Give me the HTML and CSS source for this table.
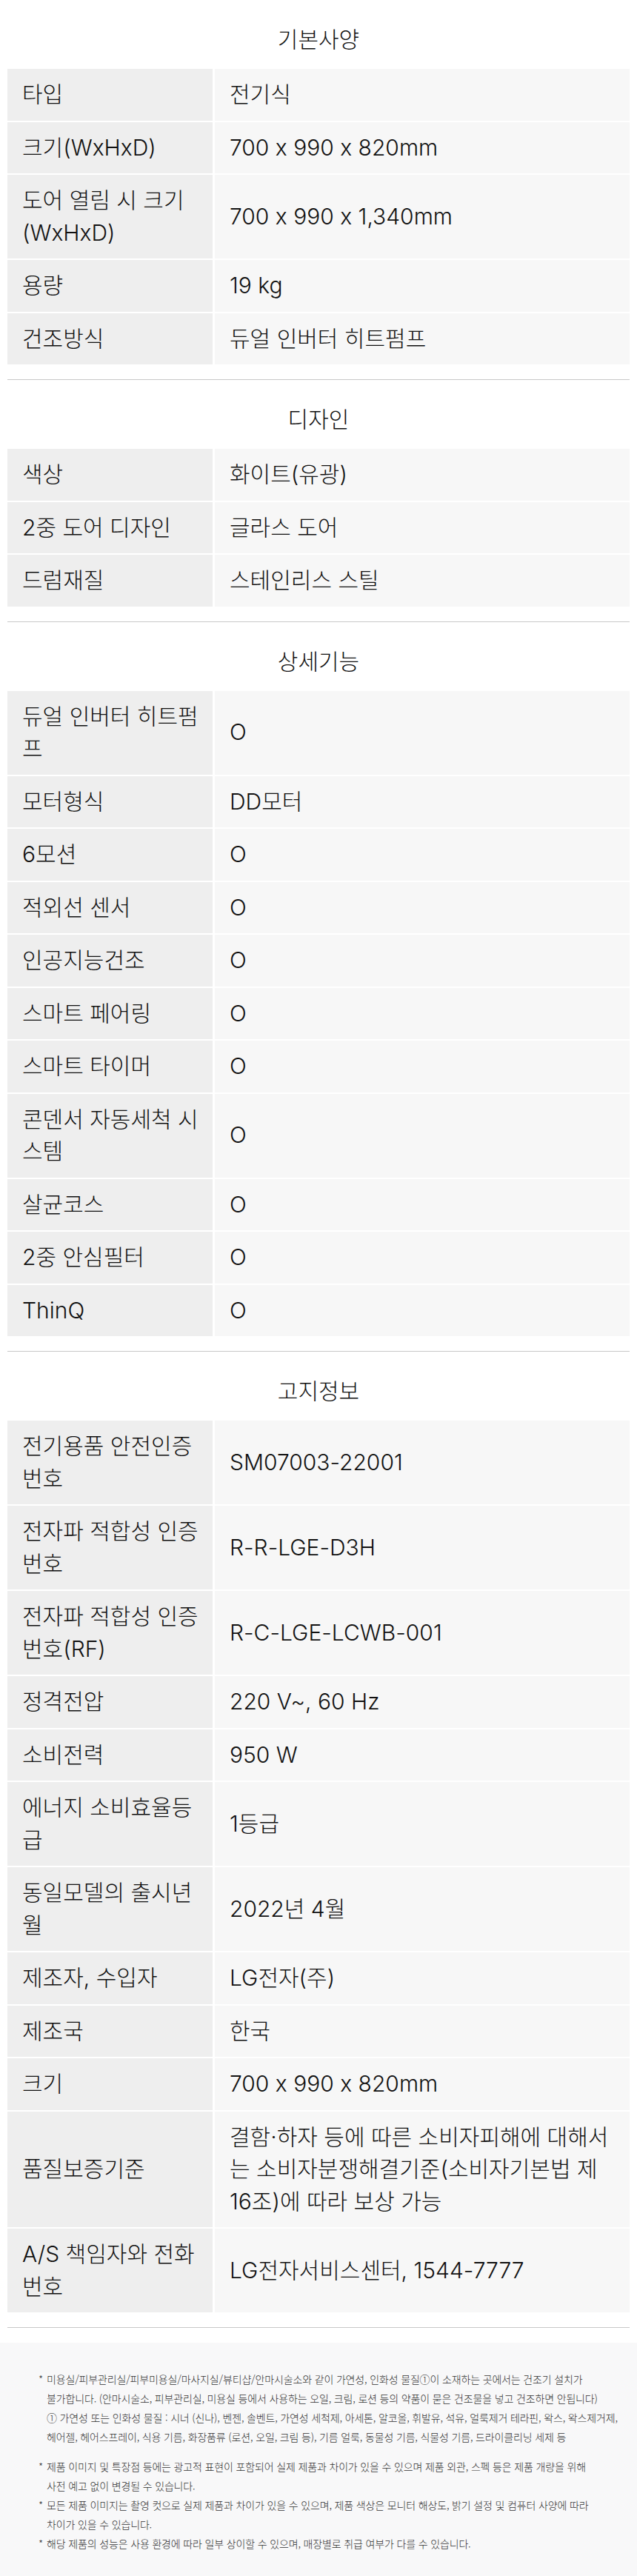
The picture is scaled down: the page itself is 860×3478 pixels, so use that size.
FILE: index.html
```html
<!DOCTYPE html>
<html lang="ko">
<head>
    <meta charset="UTF-8">
    <meta name="viewport" content="width=device-width, initial-scale=1.0">
    <title>제품 사양</title>
    <link rel="stylesheet" href="styles.css">
</head>
<body>
    <div class="spec">
        <section class="spec-group">
            <h2 class="spec-title">기본사양</h2>
            <dl class="spec-list">
                <dt>타입</dt><dd>전기식</dd>
                <dt>크기(WxHxD)</dt><dd>700 x 990 x 820mm</dd>
                <dt>도어 열림 시 크기(WxHxD)</dt><dd>700 x 990 x 1,340mm</dd>
                <dt>용량</dt><dd>19 kg</dd>
                <dt>건조방식</dt><dd>듀얼 인버터 히트펌프</dd>
            </dl>
        </section>

        <section class="spec-group">
            <h2 class="spec-title">디자인</h2>
            <dl class="spec-list">
                <dt>색상</dt><dd>화이트(유광)</dd>
                <dt>2중 도어 디자인</dt><dd>글라스 도어</dd>
                <dt>드럼재질</dt><dd>스테인리스 스틸</dd>
            </dl>
        </section>

        <section class="spec-group">
            <h2 class="spec-title">상세기능</h2>
            <dl class="spec-list">
                <dt>듀얼 인버터 히트펌프</dt><dd>O</dd>
                <dt>모터형식</dt><dd>DD모터</dd>
                <dt>6모션</dt><dd>O</dd>
                <dt>적외선 센서</dt><dd>O</dd>
                <dt>인공지능건조</dt><dd>O</dd>
                <dt>스마트 페어링</dt><dd>O</dd>
                <dt>스마트 타이머</dt><dd>O</dd>
                <dt>콘덴서 자동세척 시스템</dt><dd>O</dd>
                <dt>살균코스</dt><dd>O</dd>
                <dt>2중 안심필터</dt><dd>O</dd>
                <dt>ThinQ</dt><dd>O</dd>
            </dl>
        </section>

        <section class="spec-group">
            <h2 class="spec-title">고지정보</h2>
            <dl class="spec-list">
                <dt>전기용품 안전인증 번호</dt><dd>SM07003-22001</dd>
                <dt>전자파 적합성 인증 번호</dt><dd>R-R-LGE-D3H</dd>
                <dt>전자파 적합성 인증 번호(RF)</dt><dd>R-C-LGE-LCWB-001</dd>
                <dt>정격전압</dt><dd>220 V~, 60 Hz</dd>
                <dt>소비전력</dt><dd>950 W</dd>
                <dt>에너지 소비효율등급</dt><dd>1등급</dd>
                <dt>동일모델의 출시년월</dt><dd>2022년 4월</dd>
                <dt>제조자, 수입자</dt><dd>LG전자(주)</dd>
                <dt>제조국</dt><dd>한국</dd>
                <dt>크기</dt><dd>700 x 990 x 820mm</dd>
                <dt>품질보증기준</dt><dd>결함·하자 등에 따른 소비자피해에 대해서는 소비자분쟁해결기준(소비자기본법 제16조)에 따라 보상 가능</dd>
                <dt>A/S 책임자와 전화 번호</dt><dd>LG전자서비스센터, 1544-7777</dd>
            </dl>
        </section>
    </div>

    <div class="notice">
        <p class="notice-item">미용실/피부관리실/피부미용실/마사지실/뷰티샵/안마시술소와 같이 가연성, 인화성 물질①이 소재하는 곳에서는 건조기 설치가<br>불가합니다. (안마시술소, 피부관리실, 미용실 등에서 사용하는 오일, 크림, 로션 등의 약품이 묻은 건조물을 넣고 건조하면 안됩니다)<br>① 가연성 또는 인화성 물질 : 시너 (신나), 벤젠, 솔벤트, 가연성 세척제, 아세톤, 알코올, 휘발유, 석유, 얼룩제거 테라핀, 왁스, 왁스제거제,<br>헤어젤, 헤어스프레이, 식용 기름, 화장품류 (로션, 오일, 크림 등), 기름 얼룩, 동물성 기름, 식물성 기름, 드라이클리닝 세제 등</p>
        <ul class="notice-list">
            <li class="notice-item">제품 이미지 및 특장점 등에는 광고적 표현이 포함되어 실제 제품과 차이가 있을 수 있으며 제품 외관, 스펙 등은 제품 개량을 위해<br>사전 예고 없이 변경될 수 있습니다.</li>
            <li class="notice-item">모든 제품 이미지는 촬영 컷으로 실제 제품과 차이가 있을 수 있으며, 제품 색상은 모니터 해상도, 밝기 설정 및 컴퓨터 사양에 따라<br>차이가 있을 수 있습니다.</li>
            <li class="notice-item">해당 제품의 성능은 사용 환경에 따라 일부 상이할 수 있으며, 매장별로 취급 여부가 다를 수 있습니다.</li>
        </ul>
    </div>
</body>
</html>
```

FILE: styles.css
```css
body {
    margin: 0;
    font-family: Inter, "Noto Sans CJK KR", sans-serif;
    font-weight: 300;
    font-feature-settings: "calt" 0; /* keep a plain x between numbers */
    color: #111;
    background-color: #fff;
}

.spec {
    padding: 0 10px;
}

.spec-group {
    padding: 32px 0 20px;
    border-bottom: 1px solid #c8c8c8;
}

.spec-title {
    margin: 0 0 18px;
    font-size: 30px;
    font-weight: 300;
    line-height: 43px;
    text-align: center;
}

.spec-list {
    display: grid;
    grid-template-columns: 277px 1fr;
    gap: 2px 3px;
    margin: 0;
    font-size: 30px;
    line-height: 43.5px;
}

.spec-list dt,
.spec-list dd {
    display: flex;
    align-items: center;
    margin: 0;
    padding: 13px 20px;
}

.spec-list dt {
    padding-right: 12px;
    background-color: #eeeeee; /* label column */
}

.spec-list dd {
    background-color: #f7f7f7; /* value column */
}

.notice {
    margin-top: 20px;
    padding: 36px 20px 36px 52px;
    background-color: #f8f8f9;
    color: #333;
    font-family: "Noto Sans CJK KR", sans-serif;
    font-size: 14px;
    letter-spacing: -0.15px;
    line-height: 26px;
    word-break: keep-all;
}

.notice-list {
    margin: 14px 0 0;
    padding: 0;
    list-style: none;
}

.notice-item {
    margin: 0;
    padding-left: 11px;
    text-indent: -11px;
}

.notice-item::before {
    content: "*";
    display: inline-block;
    width: 11px;
    text-indent: 0;
}
```
